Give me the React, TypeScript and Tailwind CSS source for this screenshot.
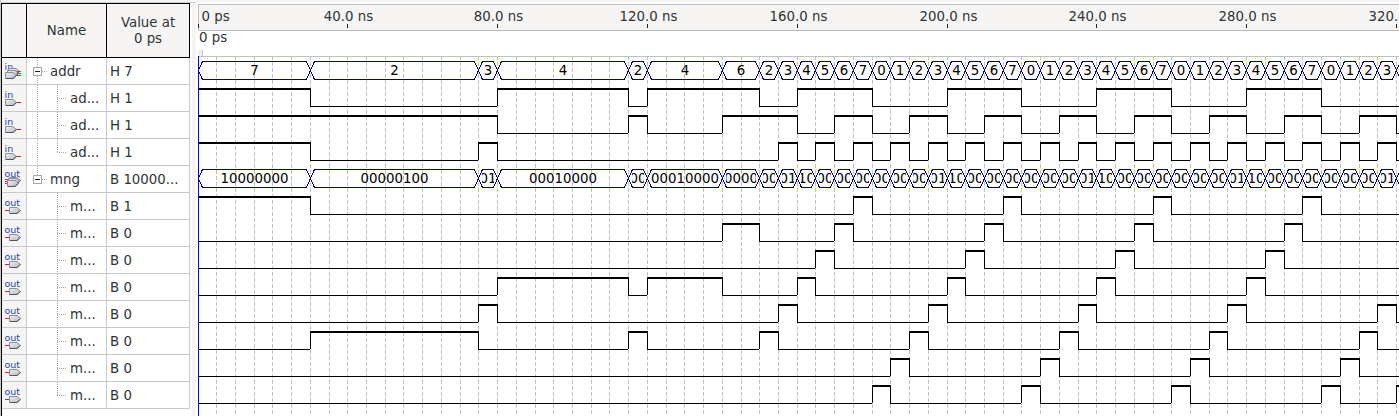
import React from "react";

type Row = { kind: "in" | "out"; group?: boolean; last?: boolean; name: string; value: string };

const rows: Row[] = [
  { kind: "in", group: true, name: "addr", value: "H 7" },
  { kind: "in", name: "ad...", value: "H 1" },
  { kind: "in", name: "ad...", value: "H 1" },
  { kind: "in", last: true, name: "ad...", value: "H 1" },
  { kind: "out", group: true, name: "mng", value: "B 10000..." },
  { kind: "out", name: "m...", value: "B 1" },
  { kind: "out", name: "m...", value: "B 0" },
  { kind: "out", name: "m...", value: "B 0" },
  { kind: "out", name: "m...", value: "B 0" },
  { kind: "out", name: "m...", value: "B 0" },
  { kind: "out", name: "m...", value: "B 0" },
  { kind: "out", name: "m...", value: "B 0" },
  { kind: "out", last: true, name: "m...", value: "B 0" },
];

// Address bus: [start time in ns, value]
const steps: [number, number][] = [
  [0, 7], [30, 2], [75, 3], [80, 4], [115, 2], [120, 4], [140, 6],
  [150, 2], [155, 3], [160, 4], [165, 5], [170, 6], [175, 7],
];
for (let t = 180, v = 0; t < 320; t += 5, v = (v + 1) % 8) steps.push([t, v]);
steps.push([320, 0]);

const GRID = 18.7265;
const W = 1201;
const px = (ns: number) => Math.floor((ns / 5) * GRID + 0.0001);
const segments = steps.map(([t, v], i) => ({
  x0: px(t),
  x1: i + 1 < steps.length ? px(steps[i + 1][0]) : px(330),
  v,
}));

// Keeps the middle characters of a label that is wider than its cell
function middle(text: string, width: number) {
  const n = width < 25 ? 2 : width < 50 ? 4 : 8;
  if (text.length <= n) return text;
  const start = (text.length - n) / 2;
  return text.slice(start, start + n);
}

function Gate({ x, y }: { x: number; y: number }) {
  return (
    <g>
      <path d={`M${x + 0.5} ${y + 0.5}h7.5l3.5 3l-3.5 3h-7.5z`} fill="url(#gate)" stroke="#8a8f98" />
      <path d={`M${x + 1} ${y + 6.5}h7l3.5 -3`} fill="none" stroke="#4a5568" />
    </g>
  );
}

function PinIcon({ kind, group }: { kind: "in" | "out"; group?: boolean }) {
  const input = kind === "in";
  const baseline = group ? (input ? 12 : 11) : 13;
  return (
    <svg width="24" height="26" viewBox="0 0 24 26" className="block">
      <defs>
        <linearGradient id="gate" x1="0" y1="0" x2="1" y2="1">
          <stop offset="0" stopColor="#f0f0f0" />
          <stop offset="1" stopColor="#b4b8be" />
        </linearGradient>
      </defs>
      <text x="2.5" y={baseline} fontSize="9.5" fill="#1f44b0" fontFamily="'DejaVu Sans', sans-serif">
        {kind}
      </text>
      {group ? (
        input ? (
          <g>
            <Gate x={6} y={10} />
            <Gate x={5} y={12} />
            <Gate x={3} y={14} />
            <path d="M15 13.5h4M15 15.5h4M14 17.5h5" stroke="#e02030" />
          </g>
        ) : (
          <g>
            <path d="M3 13.5h5M3 15.5h5M3 17.5h5" stroke="#e02030" />
            <Gate x={7} y={11} />
            <Gate x={6} y={12} />
            <Gate x={5} y={14} />
          </g>
        )
      ) : (
        <g>
          <path d={input ? "M14 17.5h5" : "M3 17.5h4"} stroke="#e02030" />
          <Gate x={input ? 3 : 7} y={14} />
        </g>
      )}
    </svg>
  );
}

function Tree({ row, index }: { row: Row; index: number }) {
  const outer = index < 4;
  const dots = { stroke: "#a8a8a8", strokeDasharray: "1 1", shapeRendering: "crispEdges" as const };
  return (
    <svg width="43" height="26" viewBox="0 0 43 26" className="block shrink-0">
      {outer && <path d="M10.5 0V26" {...dots} />}
      {row.group ? (
        <g shapeRendering="crispEdges">
          {!outer && <path d="M10.5 0V9" {...dots} />}
          <path d="M15 13.5H21" {...dots} />
          <rect x="6.5" y="9.5" width="8" height="8" fill="#fff" stroke="#a8a8a8" />
          <path d="M8 13.5h5" stroke="#222" />
        </g>
      ) : (
        <g>
          <path d={row.last ? "M30.5 0V13" : "M30.5 0V26"} {...dots} />
          <path d="M30 13.5H40" {...dots} />
        </g>
      )}
    </svg>
  );
}

function NodeTable() {
  return (
    <div className="flex h-full w-[190px] shrink-0 flex-col border-l border-[#c8c8c8] bg-white">
      <div className="h-[3px] border-b border-[#cfcdcb] bg-[#f6f5f4]" />
      <div className="flex h-[55px] border-y border-l border-black bg-[#f6f5f4] text-center leading-4">
        <div className="w-[25px] border-r border-black" />
        <div className="flex w-20 items-center justify-center border-r border-black pt-px">Name</div>
        <div className="flex w-[83px] items-center justify-center border-r border-black pt-px">
          <span>
            Value at
            <br />0 ps
          </span>
        </div>
      </div>
      {rows.map((row, i) => (
        <div key={i} className="flex h-[27px] shrink-0 border-l border-black leading-7">
          <div className="w-[25px] border-r border-b border-[#c8c8c8] bg-[#f6f5f4]">
            <PinIcon kind={row.kind} group={row.group} />
          </div>
          <div className="flex w-20 overflow-hidden border-r border-b border-[#c8c8c8]">
            <Tree row={row} index={i} />
            <span className={row.group ? "-ml-5" : ""}>{row.name}</span>
          </div>
          <div className="w-[83px] border-r border-b border-[#c8c8c8] pl-[3px] whitespace-nowrap">{row.value}</div>
        </div>
      ))}
      <div className="min-h-0 flex-1 border-l border-black" />
    </div>
  );
}

function Ruler() {
  return (
    <svg width={W} height="27" viewBox={`0 0 ${W} 27`} className="block shrink-0 bg-[#f6f5f4]" fontSize="13.33" fill="#2e3436">
      <path d={`M0 .5H${W}M0 26.5H${W}M.5 0V27`} stroke="#c0bfbd" fill="none" shapeRendering="crispEdges" />
      {[0, 40, 80, 120, 160, 200, 240, 280, 320].map((t) => (
        <g key={t}>
          <rect x={px(t)} y="20" width="1" height="4" fill="#222" />
          <text x={t === 0 ? 3.5 : px(t) + 1.5} y="17" textAnchor={t === 0 ? "start" : "middle"}>
            {t === 0 ? "0 ps" : t === 320 ? "320.0 ns" : `${t}.0 ns`}
          </text>
        </g>
      ))}
    </svg>
  );
}

function Bus({ y, label, id }: { y: number; label: (v: number) => string; id: string }) {
  return (
    <g>
      {segments.map(({ x0, x1, v }, i) => {
        const a = x0 + 0.5;
        const b = x1 + 0.5;
        return (
          <g key={i}>
            <path
              d={`M${a} ${y + 9.5}L${a + 4} ${y + 0.5}H${b - 4}L${b} ${y + 9.5}L${b - 4} ${y + 18.5}H${a + 4}Z`}
              fill="none"
              stroke="#000080"
              shapeRendering="crispEdges"
            />
            <clipPath id={`${id}${i}`}>
              <rect x={x0 + 4} y={y} width={Math.max(0, x1 - x0 - 7)} height="19" />
            </clipPath>
            {x0 < 1197 && (
              <text x={(x0 + x1) / 2 + 0.5} y={y + 14} textAnchor="middle" fontSize="13.33" fill="#000" clipPath={`url(#${id}${i})`}>
                {middle(label(v), x1 - x0)}
              </text>
            )}
          </g>
        );
      })}
    </g>
  );
}

function Signal({ y, high }: { y: number; high: (v: number) => boolean }) {
  return (
    <g fill="#000" shapeRendering="crispEdges">
      {segments.map(({ x0, x1, v }, i) => {
        const on = high(v);
        const changed = i > 0 && high(segments[i - 1].v) !== on;
        return (
          <g key={i}>
            <rect x={x0} y={on ? y : y + 18} width={x1 - x0 + (on ? 1 : 0)} height={on ? 2 : 1} />
            {changed && <rect x={x0} y={y} width="1" height={on ? 18 : 19} />}
          </g>
        );
      })}
    </g>
  );
}

function Waves() {
  const grid = Array.from({ length: 64 }, (_, i) => px((i + 1) * 5));
  const bits = [7, 6, 5, 4, 3, 2, 1, 0];
  return (
    <svg width={W} height="360" viewBox={`0 0 ${W} 360`} className="block shrink-0">
      <path d={`M0 .5H${W}`} stroke="#c0c0c0" shapeRendering="crispEdges" />
      {grid.map((x) => (
        <path key={x} d={`M${x + 0.5} 0V358`} stroke="#c0c0c0" strokeDasharray="4 2" shapeRendering="crispEdges" />
      ))}
      <Bus id="addr" y={5} label={(v) => String(v)} />
      {[2, 1, 0].map((b, i) => (
        <Signal key={b} y={32 + 27 * i} high={(v) => ((v >> b) & 1) === 1} />
      ))}
      <Bus id="mng" y={113} label={(v) => (1 << v).toString(2).padStart(8, "0")} />
      {bits.map((b, i) => (
        <Signal key={b} y={140 + 27 * i} high={(v) => v === b} />
      ))}
      <rect x="0" y="0" width="1" height="360" fill="#0000ff" />
    </svg>
  );
}

export default function App() {
  return (
    <div className="flex h-[416px] w-[1399px] overflow-hidden bg-white font-['DejaVu_Sans',sans-serif] text-[13.33px] text-[#2e3436]">
      <NodeTable />
      <div className="flex w-[6px] shrink-0 flex-col">
        <div className="h-[3px] border-b border-[#cfcdcb] bg-[#f6f5f4]" />
        <div className="ml-0.5 flex-1 bg-[#f6f5f4]" />
      </div>
      <div className="flex min-w-0 flex-1 flex-col">
        <div className="h-[2px] bg-[#f6f5f4]" />
        <div className="flex min-h-0 flex-1 flex-col pt-[2px] pl-[2px]">
          <Ruler />
          <div className="flex h-[25px] shrink-0 flex-col justify-between pl-px">
            <span className="leading-[13px]">0 ps</span>
            <div className="-ml-px h-[6px] w-[5px] border-r border-[#c8c8c8] bg-[#f0efed]" />
          </div>
          <Waves />
        </div>
      </div>
    </div>
  );
}
